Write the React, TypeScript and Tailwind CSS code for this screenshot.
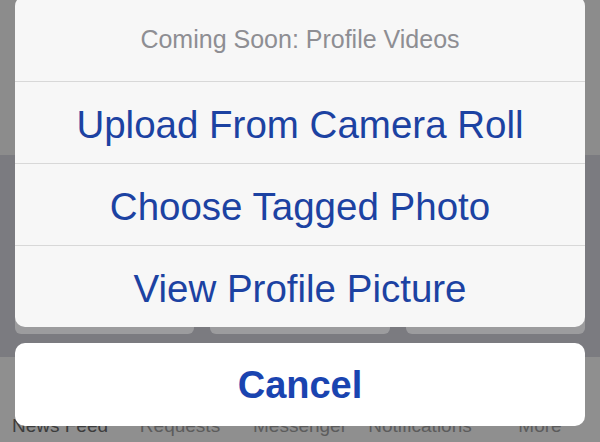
import React from 'react';

const tabs = ['News Feed', 'Requests', 'Messenger', 'Notifications', 'More'];
const options = ['Upload From Camera Roll', 'Choose Tagged Photo', 'View Profile Picture'];

export default function App() {
  return (
    <div
      className="relative w-[600px] h-[442px] overflow-hidden"
      style={{ fontFamily: '"Liberation Sans", Arial, sans-serif' }}
    >
      {/* dimmed profile page behind the sheet */}
      <div className="h-[155px] bg-[#8c8c8c]" />
      <div className="h-[202px] bg-[#7b7b80] pt-[145px] px-[15px]">
        <div className="grid grid-cols-3 gap-[16px]">
          <div className="h-[34px] rounded-b-[6px] bg-[#9c9c9e]" />
          <div className="h-[34px] rounded-b-[6px] bg-[#9c9c9e]" />
          <div className="h-[34px] rounded-b-[6px] bg-[#9c9c9e]" />
        </div>
      </div>
      <div className="h-[85px] bg-[#8f8f8f] pt-[58px] grid grid-cols-5">
        {tabs.map((t, i) => (
          <div
            key={t}
            className={`text-center text-[19px] leading-[22px] whitespace-nowrap ${
              i === 0 ? 'text-[#3c3c3c]' : 'text-[#5c5c5c]'
            }`}
          >
            {t}
          </div>
        ))}
      </div>

      {/* action sheet overlay */}
      <div className="absolute left-[15px] right-[15px] top-[-4px] flex flex-col gap-[16px]">
        <div className="rounded-[10px] bg-[#f7f7f7] overflow-hidden">
          <div className="h-[85px] pt-[2px] flex items-center justify-center text-[25px] text-[#8e8e93]">
            Coming Soon: Profile Videos
          </div>
          {options.map((o) => (
            <div
              key={o}
              className="h-[82px] pt-[4px] border-t border-[#d8d8d8] flex items-center justify-center text-[38.5px] text-[#1c42a2]"
            >
              {o}
            </div>
          ))}
        </div>
        <div className="h-[83px] pt-[2px] rounded-[10px] bg-white flex items-center justify-center text-[38px] font-bold text-[#1a44b0]">
          Cancel
        </div>
      </div>
    </div>
  );
}
